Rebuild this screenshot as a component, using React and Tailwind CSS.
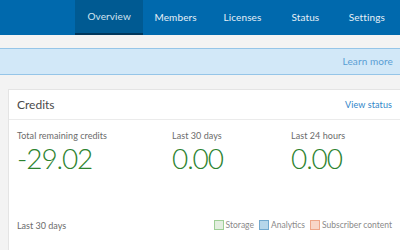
export default function App() {
  const font = { fontFamily: "Lato, 'Open Sans', sans-serif" };
  return (
    <div className="w-[400px] h-[250px] overflow-hidden bg-[#f3f3f3]" style={font}>
      <div className="h-[35px] bg-[#0069ad] flex pl-[75px] text-[10px] tracking-[0.1px]">
        <div className="w-[69px] bg-[#005a92] border-b-[2px] border-[#00375c] flex items-center justify-center text-[#d2e3f0]">Overview</div>
        <div className="w-[65px] flex items-center justify-center text-[#e6f0f7]">Members</div>
        <div className="w-[70px] flex items-center justify-center text-[#e6f0f7]">Licenses</div>
        <div className="w-[57px] flex items-center justify-center text-[#e6f0f7]">Status</div>
        <div className="w-[67px] flex items-center justify-center text-[#e6f0f7]">Settings</div>
      </div>
      <div className="h-[13px]"></div>
      <div className="h-[27px] bg-[#d2e8f8] border-y border-[#95c5e8] flex items-center justify-end pr-[7px] text-[10px] tracking-[0.1px] text-[#5a9ed4]">Learn more</div>
      <div className="h-[14px]"></div>
      <div className="ml-2 w-[400px] h-[200px] bg-white border border-[#e4e4e4]">
        <div className="h-[30px] flex items-center justify-between pl-[8px] pr-[15px] border-b border-[#ebebeb]">
          <span className="text-[12px] text-[#4a4a4a]">Credits</span>
          <span className="text-[9px] tracking-[0.1px] text-[#2f86c9]">View status</span>
        </div>
        <div className="flex pl-[8px] pt-[9px]">
          <div className="w-[155px]">
            <div className="text-[9px] tracking-[0.05px] text-[#6b6b6b]">Total remaining credits</div>
            <div className="text-[28px] leading-[30px] font-light tracking-[-1.1px] text-[#2d832f]">-29.02</div>
          </div>
          <div className="w-[119px]">
            <div className="text-[9px] tracking-[0.05px] text-[#6b6b6b]">Last 30 days</div>
            <div className="text-[28px] leading-[30px] font-light tracking-[-1.1px] text-[#2d832f]">0.00</div>
          </div>
          <div>
            <div className="text-[9px] tracking-[0.05px] text-[#6b6b6b]">Last 24 hours</div>
            <div className="text-[28px] leading-[30px] font-light tracking-[-1.1px] text-[#2d832f]">0.00</div>
          </div>
        </div>
        <div className="flex items-center justify-between pl-[8px] pr-[15px] mt-[46px] text-[9px] text-[#6b6b6b]">
          <span>Last 30 days</span>
          <div className="flex items-center text-[8.5px] text-[#8a8a8a]">
            <span className="w-[10px] h-[10px] bg-[#e3eee0] border border-[#9fcf97] mr-[2px]"></span>
            <span className="mr-[5px]">Storage</span>
            <span className="w-[10px] h-[10px] bg-[#b6d6ea] border border-[#72a9cf] mr-[2px]"></span>
            <span className="mr-[5px]">Analytics</span>
            <span className="w-[10px] h-[10px] bg-[#f8d6c8] border border-[#eea78a] mr-[2px]"></span>
            <span>Subscriber content</span>
          </div>
        </div>
      </div>
    </div>
  );
}
